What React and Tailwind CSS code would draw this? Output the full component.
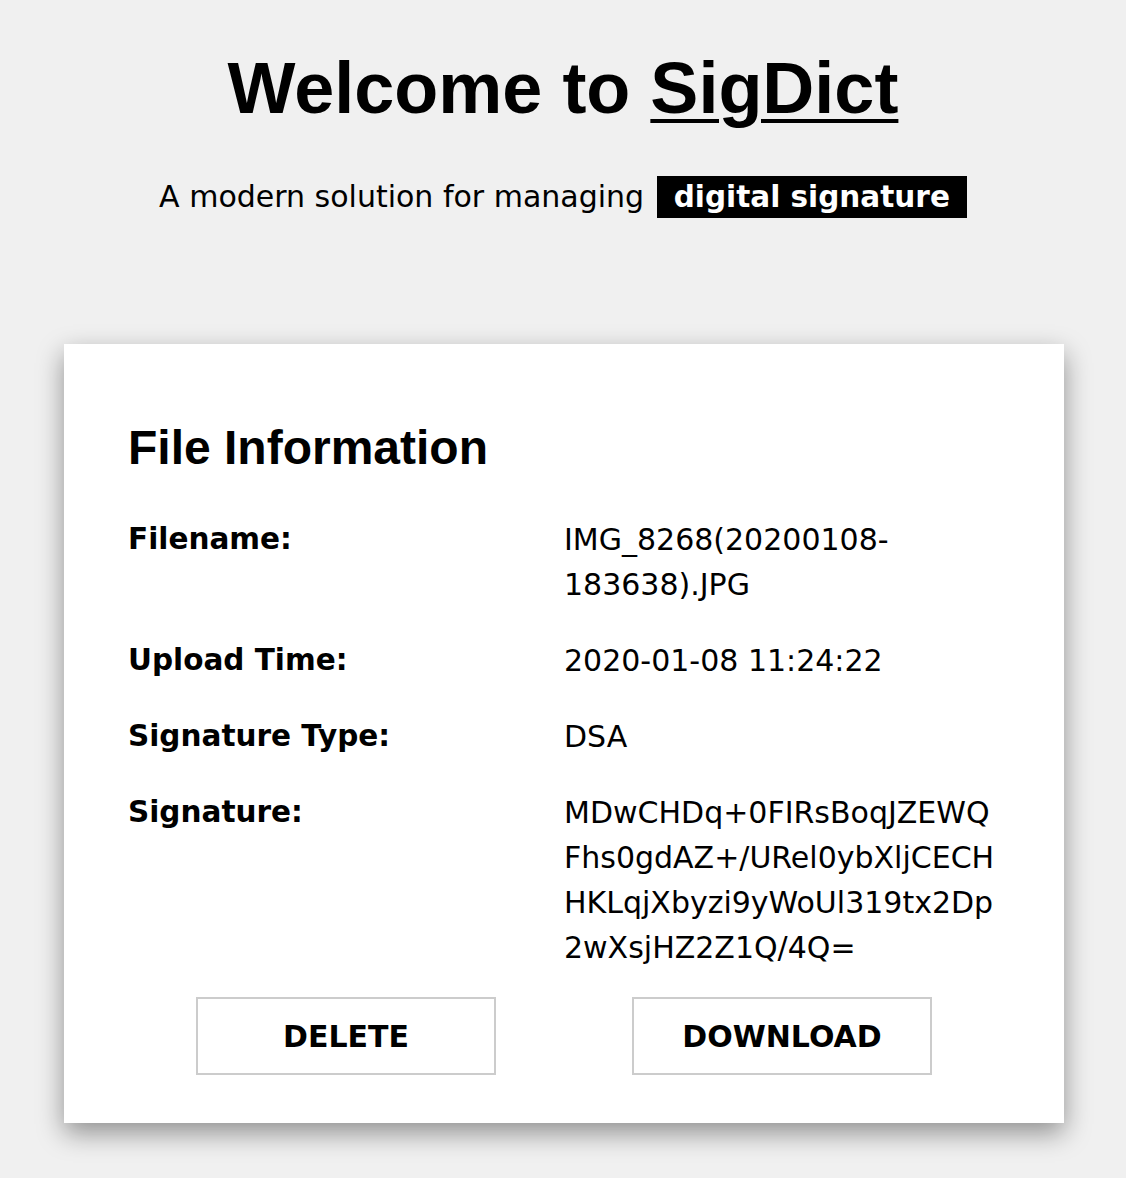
export default function App() {
  const rows = [
    { label: 'Filename:', value: 'IMG_8268(20200108-183638).JPG', wrap: 'break-words' },
    { label: 'Upload Time:', value: '2020-01-08 11:24:22', wrap: '' },
    { label: 'Signature Type:', value: 'DSA', wrap: '' },
    {
      label: 'Signature:',
      value: 'MDwCHDq+0FIRsBoqJZEWQFhs0gdAZ+/URel0ybXljCECHHKLqjXbyzi9yWoUl319tx2Dp2wXsjHZ2Z1Q/4Q=',
      wrap: 'break-all',
    },
  ];

  return (
    <div className="min-h-screen bg-[#f0f0f0] pt-[52px] pb-[55px] font-['DejaVu_Sans',Verdana,sans-serif] text-black">
      {/* Header */}
      <h1 className="text-center text-[72px] leading-none font-bold font-['Liberation_Sans',Arial,sans-serif]">
        Welcome to <a href="#" className="underline decoration-[4px] underline-offset-[6px]">SigDict</a>
      </h1>
      <p className="mt-[50px] text-center text-[30px] leading-[45px]">
        A modern solution for managing{' '}
        <span className="ml-[3px] bg-black px-[17px] py-[4px] font-bold text-white text-[29.5px]">
          digital signature
        </span>
      </p>

      {/* Card */}
      <div className="ml-16 mt-[124px] w-[1000px] bg-white px-16 pt-[76px] pb-12 shadow-[0_10px_25px_rgba(0,0,0,0.4)]">
        <h2 className="text-[48px] leading-[56px] font-bold font-['Liberation_Sans',Arial,sans-serif]">
          File Information
        </h2>

        <div className="mt-[41px] flex flex-col gap-[31px]">
          {rows.map((r) => (
            <div key={r.label} className="grid grid-cols-2 text-[30px] leading-[45px]">
              <div className="font-bold text-[29.5px]">{r.label}</div>
              <div className={r.wrap}>{r.value}</div>
            </div>
          ))}
        </div>

        <div className="mt-[27px] grid grid-cols-2">
          <div className="flex justify-center">
            <button className="h-[78px] w-[300px] border-2 border-[#cccccc] bg-white text-[30px] font-bold">
              DELETE
            </button>
          </div>
          <div className="flex justify-center">
            <button className="h-[78px] w-[300px] border-2 border-[#cccccc] bg-white text-[30px] font-bold">
              DOWNLOAD
            </button>
          </div>
        </div>
      </div>
    </div>
  );
}
